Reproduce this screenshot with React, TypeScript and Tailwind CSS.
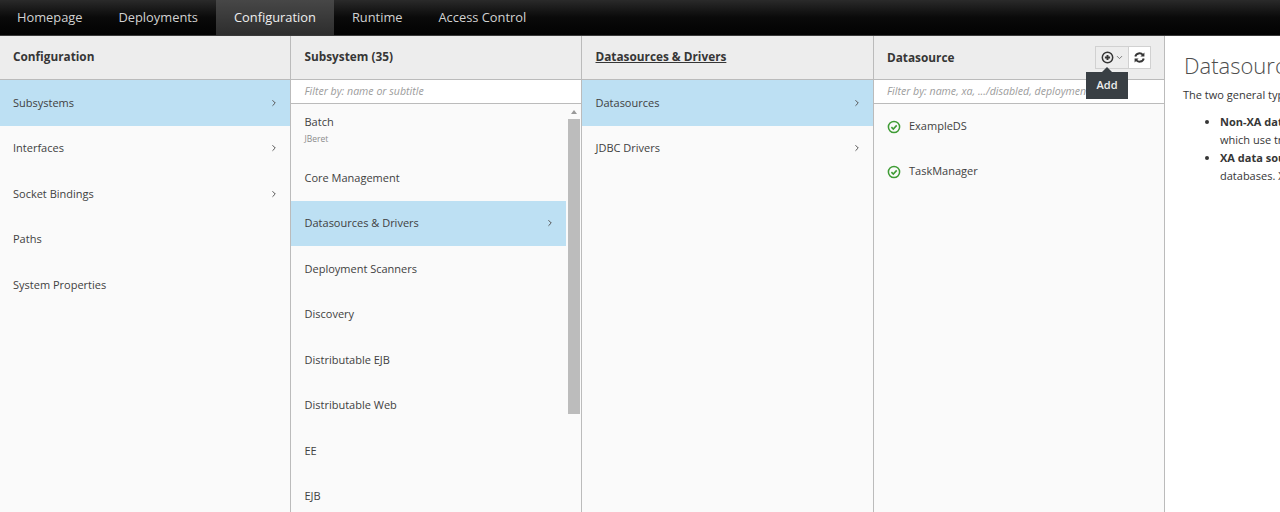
import { ChevronRight, ChevronDown } from "lucide-react";

const NAV = ["Homepage", "Deployments", "Configuration", "Runtime", "Access Control"];
const SUBSYSTEMS = ["Core Management", "Datasources & Drivers", "Deployment Scanners", "Discovery", "Distributable EJB", "Distributable Web", "EE", "EJB"];

function Row({ label, active, arrow, inset }: { label: string; active?: boolean; arrow?: boolean; inset?: boolean }) {
  return (
    <div className={"flex h-[45.5px] shrink-0 items-center justify-between pr-[11px] text-[11px] text-[#414141] " + (inset ? "pl-[13.5px] " : "pl-[13px] ") + (active ? "bg-[#bde0f3]" : "")}>
      <span>{label}</span>
      {arrow && <ChevronRight size={10} strokeWidth={2.4} className="text-[#555]" />}
    </div>
  );
}

function Head({ title, underline, inset }: { title: string; underline?: boolean; inset?: boolean }) {
  return (
    <div className={"flex h-[44px] shrink-0 items-center border-b border-[#bbb] bg-[#ededed] pb-px text-[11.8px] font-bold text-[#363636] " + (inset ? "pl-[13.5px]" : "pl-[13px]")}>
      <span className={underline ? "underline" : ""}>{title}</span>
    </div>
  );
}

function CheckIcon() {
  return (
    <svg width="14" height="14" viewBox="0 0 14 14" fill="none" stroke="#3f9c35" strokeWidth="1.5" className="shrink-0">
      <circle cx="7" cy="7" r="5.6" />
      <path d="M4.4 7.1 L6.3 9 L9.7 5.4" strokeWidth="1.6" />
    </svg>
  );
}

export default function App() {
  return (
    <div className="flex h-[512px] w-[1280px] flex-col overflow-hidden bg-white font-['Open_Sans',sans-serif]">
      {/* Top nav */}
      <nav className="flex h-[36px] shrink-0 border-b border-[#3a3a3a] bg-gradient-to-b from-[#2a2a2a] via-[#0a0a0a] to-[#030303] text-[12.85px]">
        {NAV.map((item, i) => (
          <div key={item} className={"flex items-center px-[18px] " + (i === 0 ? "-ml-px " : "") + (item === "Configuration" ? "bg-gradient-to-b from-[#474747] to-[#2d2d2d] text-[#eee]" : "text-[#d1d1d1]")}>
            {item}
          </div>
        ))}
      </nav>

      <div className="flex min-h-0 flex-1">
        {/* Configuration */}
        <section className="flex w-[291px] shrink-0 flex-col border-r border-[#bbb] bg-[#fafafa]">
          <Head title="Configuration" />
          <Row label="Subsystems" active arrow />
          <Row label="Interfaces" arrow />
          <Row label="Socket Bindings" arrow />
          <Row label="Paths" />
          <Row label="System Properties" />
        </section>

        {/* Subsystem */}
        <section className="flex w-[291px] shrink-0 flex-col border-r border-[#bbb] bg-[#fafafa]">
          <Head title="Subsystem (35)" inset />
          <div className="flex h-[24px] shrink-0 items-center border-b border-[#bbb] bg-white pl-[13.5px] text-[10.6px] italic text-[#9c9c9c]">Filter by: name or subtitle</div>
          <div className="flex min-h-0 flex-1">
            <div className="flex min-w-0 flex-1 flex-col overflow-hidden">
              <div className="flex h-[51px] shrink-0 flex-col pl-[13.5px] pt-[10px] text-[11px] text-[#414141]">
                <span className="leading-[16px]">Batch</span>
                <span className="mt-[3px] text-[8.5px] leading-[12px] text-[#8c8c8c]">JBeret</span>
              </div>
              {SUBSYSTEMS.map((s) => (
                <Row key={s} label={s} inset active={s === "Datasources & Drivers"} arrow={s === "Datasources & Drivers"} />
              ))}
            </div>
            <div className="flex w-[15px] shrink-0 flex-col items-center">
              <div className="mt-[6px] h-0 w-0 border-x-[3.5px] border-b-[4px] border-x-transparent border-b-[#999]" />
              <div className="mt-[5px] h-[295px] w-[12px] bg-[#bcbcbc]" />
            </div>
          </div>
        </section>

        {/* Datasources & Drivers */}
        <section className="flex w-[292px] shrink-0 flex-col border-r border-[#bbb] bg-[#fafafa]">
          <Head title="Datasources & Drivers" underline inset />
          <Row label="Datasources" active arrow inset />
          <Row label="JDBC Drivers" arrow inset />
        </section>

        {/* Datasource */}
        <section className="flex w-[291px] shrink-0 flex-col border-r border-[#bbb] bg-[#fafafa]">
          <div className="flex h-[44px] shrink-0 items-center justify-between border-b border-[#bbb] bg-[#ededed] pl-[13px] pr-[13px] text-[11.8px] font-bold text-[#363636]">
            <span>Datasource</span>
            <div className="relative flex h-[23px] border border-[#d1d1d1]">
              <div className="flex w-[33px] items-center justify-center gap-[1px] border-r border-[#d1d1d1] bg-[#ededed]">
                <svg width="13" height="13" viewBox="0 0 13 13" fill="none" stroke="#363636" strokeWidth="1.5">
                  <circle cx="6.5" cy="6.5" r="5.2" />
                  <path d="M6.5 3.9 V9.1 M3.9 6.5 H9.1" strokeWidth="1.9" />
                </svg>
                <ChevronDown size={9} strokeWidth={2} className="text-[#555]" />
              </div>
              <div className="flex w-[21px] items-center justify-center bg-white">
                <svg width="11" height="11" viewBox="0 0 11 11" fill="none" stroke="#363636" strokeWidth="2">
                  <path d="M1.3 4.6 A4.3 4.3 0 0 1 8.9 3" />
                  <path d="M9.7 6.4 A4.3 4.3 0 0 1 2.1 8" />
                  <path d="M10.4 0.4 V4.4 H6.4 Z M0.6 10.6 V6.6 H4.6 Z" fill="#363636" stroke="none" />
                </svg>
              </div>
              {/* Tooltip */}
              <div className="absolute left-[-10px] top-[25px] z-10 flex h-[27px] w-[42px] items-center justify-center bg-[#393f44] text-[11px] font-semibold text-[#eee]">
                <div className="absolute left-[16px] top-[-5px] h-0 w-0 border-x-[5px] border-b-[5px] border-x-transparent border-b-[#393f44]" />
                Add
              </div>
            </div>
          </div>
          <div className="flex h-[24px] shrink-0 items-center overflow-hidden whitespace-nowrap border-b border-[#bbb] bg-white pl-[13px] text-[10.6px] italic text-[#9c9c9c]">Filter by: name, xa, .../disabled, deployment</div>
          {["ExampleDS", "TaskManager"].map((ds) => (
            <div key={ds} className="flex h-[45.5px] shrink-0 items-center gap-[8px] pl-[13px] text-[11px] text-[#414141]">
              <CheckIcon />
              <span className="-mt-[2px]">{ds}</span>
            </div>
          ))}
        </section>

        {/* Preview */}
        <section className="min-w-0 flex-1 overflow-hidden whitespace-nowrap pl-[18px] text-[11px] text-[#363636]">
          <h1 className="ml-px mt-[15px] text-[22px] font-light leading-[28px] text-[#4d4d4d]">Datasources</h1>
          <p className="mt-[8px] leading-[16px]">The two general types</p>
          <ul className="mt-[9.5px] list-disc pl-[37px] leading-[18.3px]">
            <li><b>Non-XA data</b><br />which use tr</li>
            <li><b>XA data sources</b><br />databases. XA</li>
          </ul>
        </section>
      </div>
    </div>
  );
}
